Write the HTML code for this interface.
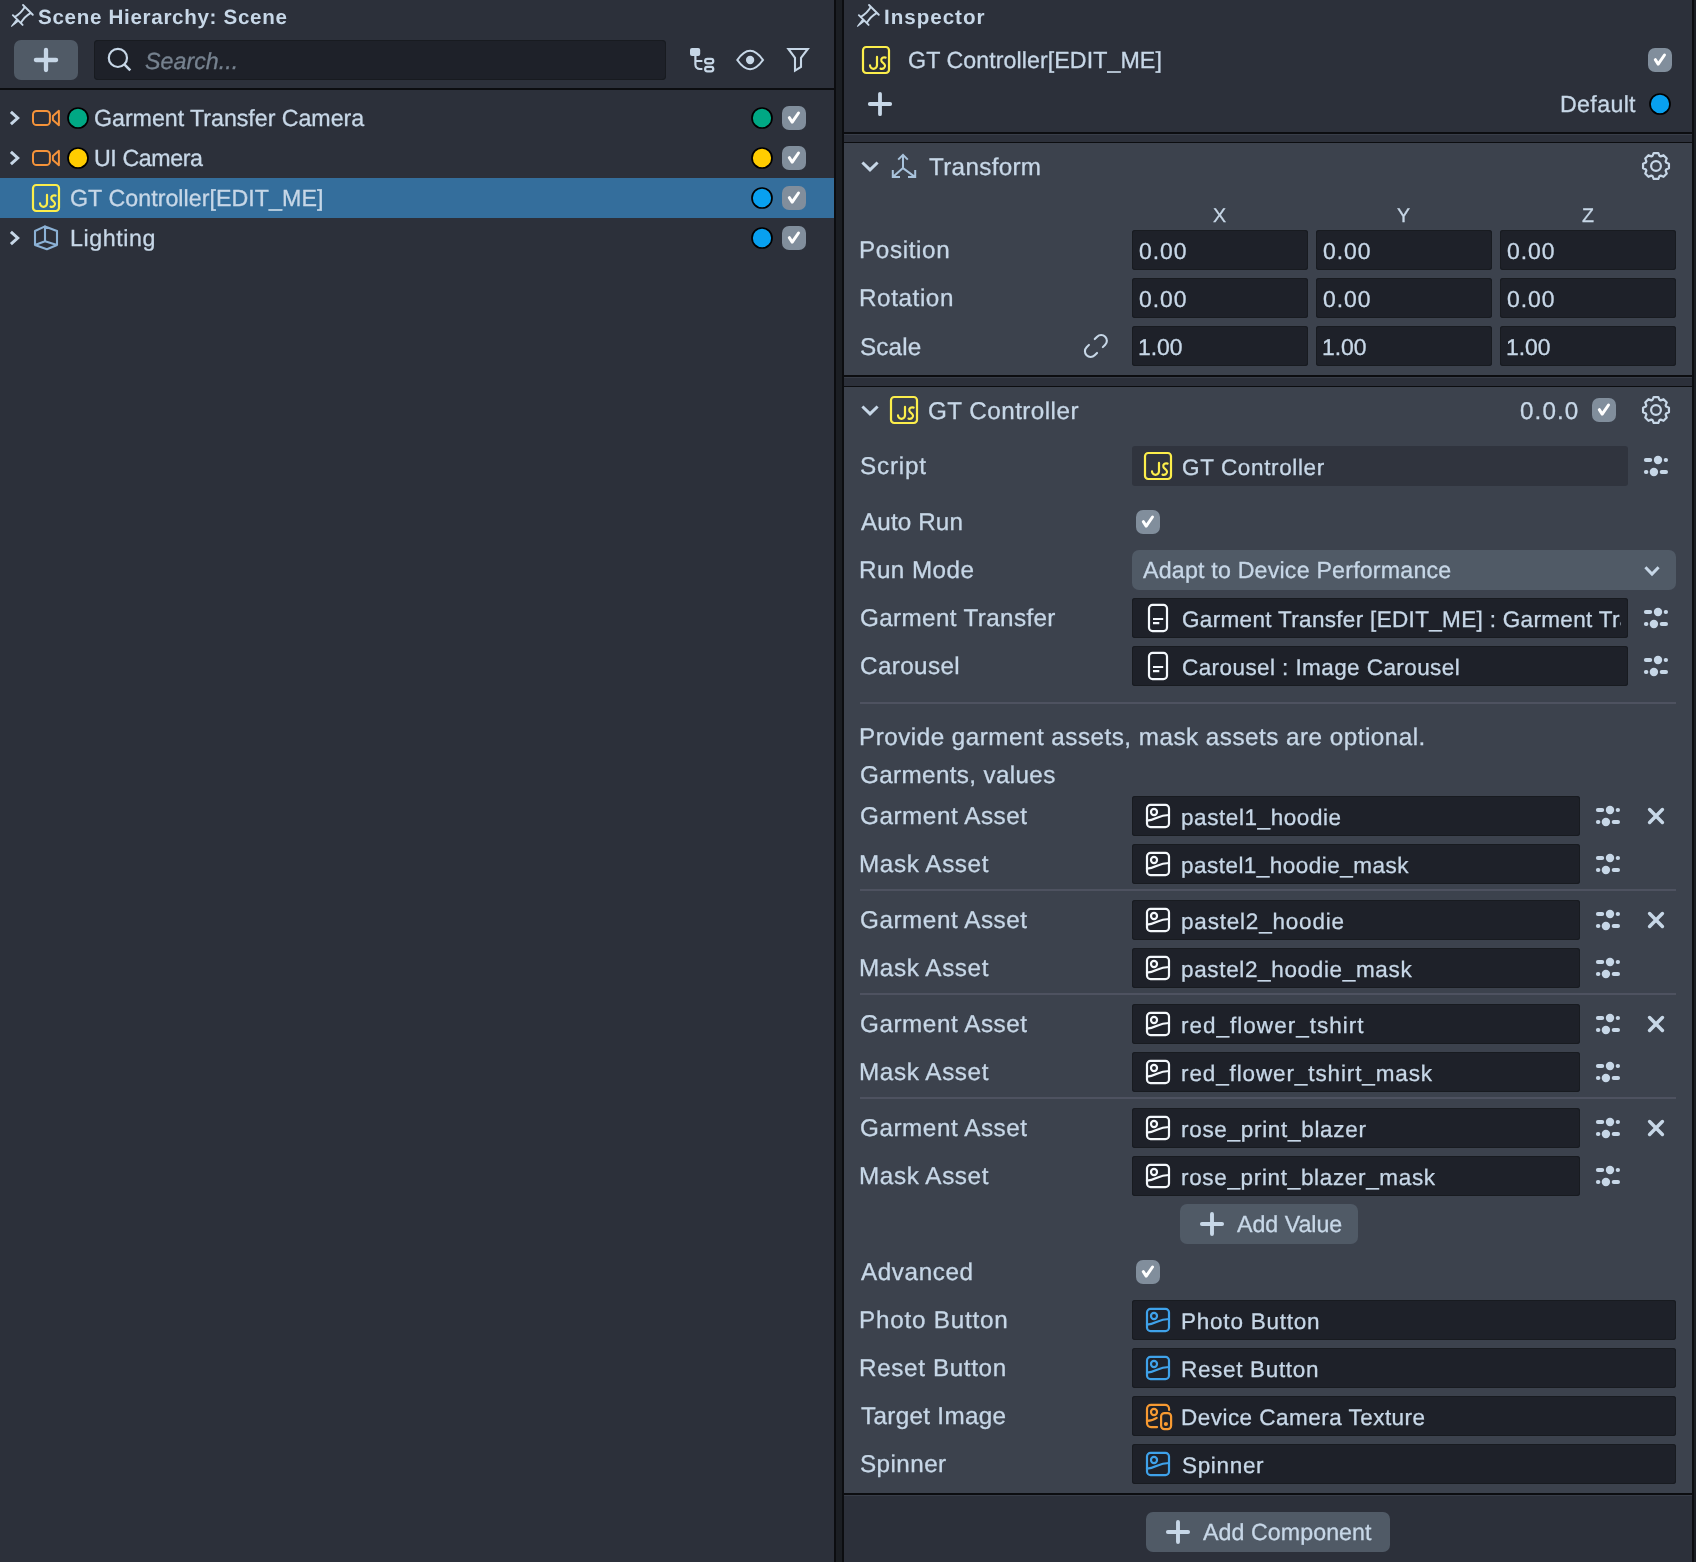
<!DOCTYPE html>
<html lang="en"><head><meta charset="utf-8"><title>Lens Studio - Scene Hierarchy / Inspector</title>
<style>
html,body{margin:0;padding:0}
body{width:1696px;height:1562px;position:relative;overflow:hidden;background:#2c303a;font-family:"Liberation Sans", sans-serif;color:#c7d7e7}
.b{position:absolute;box-sizing:border-box}
.t{position:absolute;white-space:pre;line-height:1;margin:0;padding:0;transform:skewX(.05deg);-webkit-text-stroke:.3px}
.in{background:#1e2129;border-radius:3px;box-shadow:inset 0 0 0 1px #181b20}
.btn{background:#505a66;border-radius:7px}
.chk{background:#818e9c;border-radius:7px;width:24px;height:24px}
.sec{background:#3c424d}
.dk{background:#0c0d10}
.sp{background:#4e5260;height:2px;left:860px;width:816px}
svg{position:absolute;left:0;top:0}
</style></head><body>
<!-- Scene Hierarchy panel -->
<div class="b btn" style="left:14px;top:40px;width:64px;height:40px;"></div>
<div class="b in" style="left:94px;top:40px;width:572px;height:40px;border-radius:4px"></div>
<div class="b dk" style="left:0px;top:88px;width:834px;height:2px;"></div>
<div class="b " style="left:0px;top:178px;width:834px;height:40px;background:#346e9c"></div>
<div class="b chk" style="left:782px;top:106px;width:24px;height:24px;"></div>
<div class="b chk" style="left:782px;top:146px;width:24px;height:24px;"></div>
<div class="b chk" style="left:782px;top:186px;width:24px;height:24px;"></div>
<div class="b chk" style="left:782px;top:226px;width:24px;height:24px;"></div>
<div class="b " style="left:834px;top:0px;width:10px;height:1562px;background:#1b1e23;border-left:2px solid #0c0d10;border-right:2px solid #0c0d10"></div>
<!-- Inspector panel -->
<div class="b chk" style="left:1648px;top:48px;width:24px;height:24px;"></div>
<div class="b dk" style="left:844px;top:132px;width:848px;height:2px;"></div>
<div class="b " style="left:844px;top:134px;width:848px;height:1px;background:#383d48"></div>
<div class="b dk" style="left:844px;top:142px;width:848px;height:1px;"></div>
<div class="b sec" style="left:844px;top:143px;width:848px;height:232px;"></div>
<div class="b dk" style="left:844px;top:375px;width:848px;height:2px;"></div>
<div class="b " style="left:844px;top:377px;width:848px;height:1px;background:#383d48"></div>
<div class="b dk" style="left:844px;top:386px;width:848px;height:1px;"></div>
<div class="b sec" style="left:844px;top:387px;width:848px;height:1106px;"></div>
<div class="b dk" style="left:844px;top:1493px;width:848px;height:2px;"></div>
<div class="b " style="left:844px;top:1495px;width:848px;height:1px;background:#383d48"></div>
<div class="b " style="left:1692px;top:0px;width:2px;height:1562px;background:#0c0d10"></div>
<div class="b " style="left:1694px;top:0px;width:2px;height:1562px;background:#1b1e23"></div>
<div class="b in" style="left:1132px;top:230px;width:176px;height:40px;"></div>
<div class="b in" style="left:1316px;top:230px;width:176px;height:40px;"></div>
<div class="b in" style="left:1500px;top:230px;width:176px;height:40px;"></div>
<div class="b in" style="left:1132px;top:278px;width:176px;height:40px;"></div>
<div class="b in" style="left:1316px;top:278px;width:176px;height:40px;"></div>
<div class="b in" style="left:1500px;top:278px;width:176px;height:40px;"></div>
<div class="b in" style="left:1132px;top:326px;width:176px;height:40px;"></div>
<div class="b in" style="left:1316px;top:326px;width:176px;height:40px;"></div>
<div class="b in" style="left:1500px;top:326px;width:176px;height:40px;"></div>
<div class="b chk" style="left:1592px;top:398px;width:24px;height:24px;"></div>
<div class="b " style="left:1132px;top:446px;width:496px;height:40px;background:#30343e;border-radius:3px"></div>
<div class="b chk" style="left:1136px;top:510px;width:24px;height:24px;"></div>
<div class="b btn" style="left:1132px;top:550px;width:544px;height:40px;border-radius:7px"></div>
<div class="b in" style="left:1132px;top:598px;width:496px;height:40px;"></div>
<div class="b in" style="left:1132px;top:646px;width:496px;height:40px;"></div>
<div class="b sp" style="left:860px;top:702px;width:816px;height:2px;"></div>
<div class="b in" style="left:1132px;top:796px;width:448px;height:40px;"></div>
<div class="b in" style="left:1132px;top:844px;width:448px;height:40px;"></div>
<div class="b sp" style="left:860px;top:889px;width:816px;height:2px;"></div>
<div class="b in" style="left:1132px;top:900px;width:448px;height:40px;"></div>
<div class="b in" style="left:1132px;top:948px;width:448px;height:40px;"></div>
<div class="b sp" style="left:860px;top:993px;width:816px;height:2px;"></div>
<div class="b in" style="left:1132px;top:1004px;width:448px;height:40px;"></div>
<div class="b in" style="left:1132px;top:1052px;width:448px;height:40px;"></div>
<div class="b sp" style="left:860px;top:1097px;width:816px;height:2px;"></div>
<div class="b in" style="left:1132px;top:1108px;width:448px;height:40px;"></div>
<div class="b in" style="left:1132px;top:1156px;width:448px;height:40px;"></div>
<div class="b btn" style="left:1180px;top:1204px;width:178px;height:40px;"></div>
<div class="b chk" style="left:1136px;top:1260px;width:24px;height:24px;"></div>
<div class="b in" style="left:1132px;top:1300px;width:544px;height:40px;"></div>
<div class="b in" style="left:1132px;top:1348px;width:544px;height:40px;"></div>
<div class="b in" style="left:1132px;top:1396px;width:544px;height:40px;"></div>
<div class="b in" style="left:1132px;top:1444px;width:544px;height:40px;"></div>
<div class="b btn" style="left:1146px;top:1512px;width:244px;height:40px;"></div>
<div id="labels" style="position:absolute;left:0;top:0;width:1696px;height:1562px;will-change:transform">
<span class="t" style="left:37.95px;top:6.53px;font-size:20.64px;letter-spacing:0.662px;font-weight:bold;-webkit-text-stroke:0;">Scene Hierarchy: Scene</span>
<span class="t" style="left:145.40px;top:50.06px;font-size:23.26px;letter-spacing:0.01px;font-style:italic;color:#76828f;">Search...</span>
<span class="t" style="left:93.50px;top:107.31px;font-size:23.26px;letter-spacing:-0.054px;">Garment Transfer Camera</span>
<span class="t" style="left:93.52px;top:147.31px;font-size:23.26px;letter-spacing:-0.43px;">UI Camera</span>
<span class="t" style="left:69.75px;top:187.31px;font-size:23.26px;letter-spacing:0.027px;">GT Controller[EDIT_ME]</span>
<span class="t" style="left:70.42px;top:227.31px;font-size:23.26px;letter-spacing:0.574px;">Lighting</span>
<span class="t" style="left:883.62px;top:6.53px;font-size:20.64px;letter-spacing:0.953px;font-weight:bold;-webkit-text-stroke:0;">Inspector</span>
<span class="t" style="left:907.50px;top:48.51px;font-size:23.26px;letter-spacing:0.05px;">GT Controller[EDIT_ME]</span>
<span class="t" style="left:1559.67px;top:93.31px;font-size:23.26px;letter-spacing:0.318px;">Default</span>
<span class="t" style="left:929.24px;top:155.36px;font-size:24.27px;letter-spacing:0.299px;">Transform</span>
<span class="t" style="left:1213.25px;top:206.39px;font-size:19.62px;">X</span>
<span class="t" style="left:1397.20px;top:206.39px;font-size:19.62px;">Y</span>
<span class="t" style="left:1581.54px;top:206.39px;font-size:19.62px;">Z</span>
<span class="t" style="left:859.28px;top:238.26px;font-size:24.27px;letter-spacing:0.629px;">Position</span>
<span class="t" style="left:1138.88px;top:240.36px;font-size:22.97px;letter-spacing:0.902px;">0.00</span>
<span class="t" style="left:1322.88px;top:240.36px;font-size:22.97px;letter-spacing:0.902px;">0.00</span>
<span class="t" style="left:1506.88px;top:240.36px;font-size:22.97px;letter-spacing:0.902px;">0.00</span>
<span class="t" style="left:859.24px;top:286.36px;font-size:24.27px;letter-spacing:0.574px;">Rotation</span>
<span class="t" style="left:1138.88px;top:288.36px;font-size:22.97px;letter-spacing:0.902px;">0.00</span>
<span class="t" style="left:1322.88px;top:288.36px;font-size:22.97px;letter-spacing:0.902px;">0.00</span>
<span class="t" style="left:1506.88px;top:288.36px;font-size:22.97px;letter-spacing:0.902px;">0.00</span>
<span class="t" style="left:859.88px;top:335.06px;font-size:24.27px;letter-spacing:0.125px;">Scale</span>
<span class="t" style="left:1137.64px;top:336.36px;font-size:22.97px;letter-spacing:-0.081px;">1.00</span>
<span class="t" style="left:1321.64px;top:336.36px;font-size:22.97px;letter-spacing:-0.081px;">1.00</span>
<span class="t" style="left:1505.64px;top:336.36px;font-size:22.97px;letter-spacing:-0.081px;">1.00</span>
<span class="t" style="left:928.00px;top:399.21px;font-size:24.27px;letter-spacing:0.439px;">GT Controller</span>
<span class="t" style="left:1519.99px;top:399.21px;font-size:24.27px;letter-spacing:1.075px;">0.0.0</span>
<span class="t" style="left:859.88px;top:454.21px;font-size:24.27px;letter-spacing:0.795px;">Script</span>
<span class="t" style="left:1181.50px;top:456.93px;font-size:22.53px;letter-spacing:0.62px;">GT Controller</span>
<span class="t" style="left:861.00px;top:510.06px;font-size:24.27px;letter-spacing:0.107px;">Auto Run</span>
<span class="t" style="left:859.24px;top:558.06px;font-size:24.27px;letter-spacing:0.419px;">Run Mode</span>
<span class="t" style="left:1142.75px;top:559.21px;font-size:23.26px;letter-spacing:0.176px;">Adapt to Device Performance</span>
<span class="t" style="left:860.00px;top:606.36px;font-size:24.27px;letter-spacing:0.353px;">Garment Transfer</span>
<span class="t" style="left:1181.75px;top:608.53px;font-size:22.53px;letter-spacing:0.318px;width:438.65px;overflow:hidden;">Garment Transfer [EDIT_ME] : Garment Transfer</span>
<span class="t" style="left:859.96px;top:654.26px;font-size:24.27px;letter-spacing:0.37px;">Carousel</span>
<span class="t" style="left:1181.75px;top:656.73px;font-size:22.53px;letter-spacing:0.412px;">Carousel : Image Carousel</span>
<span class="t" style="left:859.28px;top:725.46px;font-size:24.27px;letter-spacing:0.474px;">Provide garment assets, mask assets are optional.</span>
<span class="t" style="left:860.00px;top:763.26px;font-size:24.27px;letter-spacing:0.343px;">Garments, values</span>
<span class="t" style="left:860.00px;top:804.26px;font-size:24.27px;letter-spacing:0.547px;">Garment Asset</span>
<span class="t" style="left:859.28px;top:852.26px;font-size:24.27px;letter-spacing:0.593px;">Mask Asset</span>
<span class="t" style="left:1181.35px;top:806.83px;font-size:22.53px;letter-spacing:0.562px;">pastel1_hoodie</span>
<span class="t" style="left:1181.35px;top:854.83px;font-size:22.53px;letter-spacing:0.463px;">pastel1_hoodie_mask</span>
<span class="t" style="left:860.00px;top:908.26px;font-size:24.27px;letter-spacing:0.547px;">Garment Asset</span>
<span class="t" style="left:859.28px;top:956.26px;font-size:24.27px;letter-spacing:0.593px;">Mask Asset</span>
<span class="t" style="left:1181.35px;top:910.83px;font-size:22.53px;letter-spacing:0.793px;">pastel2_hoodie</span>
<span class="t" style="left:1181.35px;top:958.83px;font-size:22.53px;letter-spacing:0.643px;">pastel2_hoodie_mask</span>
<span class="t" style="left:860.00px;top:1012.26px;font-size:24.27px;letter-spacing:0.547px;">Garment Asset</span>
<span class="t" style="left:859.28px;top:1060.26px;font-size:24.27px;letter-spacing:0.593px;">Mask Asset</span>
<span class="t" style="left:1181.23px;top:1014.83px;font-size:22.53px;letter-spacing:1.002px;">red_flower_tshirt</span>
<span class="t" style="left:1181.23px;top:1062.83px;font-size:22.53px;letter-spacing:0.874px;">red_flower_tshirt_mask</span>
<span class="t" style="left:860.00px;top:1116.26px;font-size:24.27px;letter-spacing:0.547px;">Garment Asset</span>
<span class="t" style="left:859.28px;top:1164.26px;font-size:24.27px;letter-spacing:0.593px;">Mask Asset</span>
<span class="t" style="left:1181.23px;top:1118.83px;font-size:22.53px;letter-spacing:0.684px;">rose_print_blazer</span>
<span class="t" style="left:1181.23px;top:1166.83px;font-size:22.53px;letter-spacing:0.658px;">rose_print_blazer_mask</span>
<span class="t" style="left:1237.00px;top:1213.31px;font-size:23.26px;letter-spacing:-0.035px;">Add Value</span>
<span class="t" style="left:861.00px;top:1260.06px;font-size:24.27px;letter-spacing:0.583px;">Advanced</span>
<span class="t" style="left:859.28px;top:1308.16px;font-size:24.27px;letter-spacing:0.755px;">Photo Button</span>
<span class="t" style="left:1181.03px;top:1310.73px;font-size:22.53px;letter-spacing:0.768px;">Photo Button</span>
<span class="t" style="left:859.24px;top:1356.16px;font-size:24.27px;letter-spacing:0.624px;">Reset Button</span>
<span class="t" style="left:1181.03px;top:1358.73px;font-size:22.53px;letter-spacing:0.658px;">Reset Button</span>
<span class="t" style="left:861.24px;top:1404.16px;font-size:24.27px;letter-spacing:0.312px;">Target Image</span>
<span class="t" style="left:1181.07px;top:1406.73px;font-size:22.53px;letter-spacing:0.462px;">Device Camera Texture</span>
<span class="t" style="left:859.88px;top:1452.16px;font-size:24.27px;letter-spacing:0.423px;">Spinner</span>
<span class="t" style="left:1181.71px;top:1454.73px;font-size:22.53px;letter-spacing:0.659px;">Spinner</span>
<span class="t" style="left:1203.25px;top:1520.91px;font-size:23.26px;letter-spacing:0.039px;">Add Component</span>
</div>
<svg width="1696" height="1562" viewBox="0 0 1696 1562" fill="none" stroke-linecap="round" stroke-linejoin="round">
<defs>
<g id="gear" stroke="#c7d7e7" stroke-width="2.2"><path d="M-3.48,-10.12 L-2.28,-12.95 L2.28,-12.95 L3.48,-10.12 L4.69,-9.62 L7.54,-10.77 L10.77,-7.54 L9.62,-4.69 L10.12,-3.48 L12.95,-2.28 L12.95,2.28 L10.12,3.48 L9.62,4.69 L10.77,7.54 L7.54,10.77 L4.69,9.62 L3.48,10.12 L2.28,12.95 L-2.28,12.95 L-3.48,10.12 L-4.69,9.62 L-7.54,10.77 L-10.77,7.54 L-9.62,4.69 L-10.12,3.48 L-12.95,2.28 L-12.95,-2.28 L-10.12,-3.48 L-9.62,-4.69 L-10.77,-7.54 L-7.54,-10.77 L-4.69,-9.62Z"/><circle r="4.9"/></g>
<g id="pin" stroke="#c7d7e7" stroke-width="1.9"><path d="M-6.9,0H6.9M-6.9,14.4H6.9M-4.3,0C-2.9,5 -2.9,9.4 -4.3,14.4M4.3,0C2.9,5 2.9,9.4 4.3,14.4"/><path d="M-1.2,14.8L0,23.2L1.2,14.8Z" fill="#c7d7e7" stroke-width="1.1"/></g>
<g id="js" stroke="#fcee4b" stroke-width="2.2"><rect x="-13" y="-13" width="26" height="26" rx="3.2"/><path d="M1,-3.1V5.3A3.5,3.5 0 0 1 -6,5.3"/><path d="M9.6,-2.4C7.2,-3.3 4.6,-1.6 5.4,1C5.9,2.7 8.6,3.4 9,5.5C9.4,7.9 6.8,9.4 4.5,8.6"/></g>
<path id="chr" d="M-4.1,-6.1L2.7,0L-4.1,6.1" stroke="#c7d7e7" stroke-width="3" stroke-linecap="butt" stroke-linejoin="miter"/>
<path id="chd" d="M-7.6,-3.6L0,3.8L7.6,-3.6" stroke="#c7d7e7" stroke-width="3" stroke-linecap="butt" stroke-linejoin="miter"/>
<path id="chd2" d="M-6.6,-3.3L0,3.4L6.6,-3.3" stroke="#c7d7e7" stroke-width="3" stroke-linecap="butt" stroke-linejoin="miter"/>
<g id="cam" stroke="#f5933a" stroke-width="2"><rect x="-13" y="-7.1" width="16.9" height="14.2" rx="3.6"/><path d="M6.9,-1.9L12.9,-7.2V7.2L6.9,1.9Z"/></g>
<circle id="dot" r="10" stroke="#000" stroke-width="1.7"/>
<path id="ck" d="M-4.7,-0.3L-1.8,4.1L4.5,-5" stroke="#fff" stroke-width="3"/>
<g id="sl" fill="#c7d7e7"><rect x="-12.1" y="-8" width="8.3" height="4" rx="2"/><circle cx="2" cy="-6" r="4.2"/><rect x="7.7" y="-8" width="4.3" height="4" rx="2"/><rect x="-12.1" y="4" width="4.5" height="4" rx="2"/><circle cx="-2.1" cy="6" r="4.2"/><rect x="3.7" y="4" width="8.3" height="4" rx="2"/></g>
<path id="xx" d="M-6.4,-6.4L6.4,6.4M6.4,-6.4L-6.4,6.4" stroke="#c7d7e7" stroke-width="3.5"/>
<g id="doc" stroke="#f4f8fc" stroke-width="2.2"><rect x="-9" y="-13.1" width="18" height="26.2" rx="3.6"/><path d="M-5,1H5.2M-5,5.1H1.3" stroke-linecap="butt"/></g>
<g id="img" stroke="#f4f8fc" stroke-width="2.2"><rect x="-11" y="-11.1" width="22" height="22.2" rx="3.6"/><circle cx="-4" cy="-4" r="3.05"/><path d="M-11,4.7C-2,4 0,-1 11,-1"/></g>
<g id="imgb" stroke="#3fa2ea" stroke-width="2.2"><rect x="-11" y="-11.1" width="22" height="22.2" rx="3.6"/><circle cx="-4" cy="-4" r="3.05"/><path d="M-11,4.7C-2,4 0,-1 11,-1"/></g>
<g id="dev" stroke="#f79a32" stroke-width="2.2"><path d="M11.1,-6V-7.1a4,4 0 0 0 -4,-4H-7a4,4 0 0 0 -4,4V7.1a4,4 0 0 0 4,4H-0.9"/><circle cx="-4" cy="-4" r="3.05"/><path d="M-11,4.8Q-5.2,4.6 -1.3,1.8"/><rect x="3.1" y="-2.9" width="10" height="16.1" rx="3.4"/><circle cx="7.9" cy="8" r="2.1" fill="#f79a32" stroke="none"/></g>
<path id="pl" d="M-10.1,0H10.1M0,-10.1V10.1" stroke="#c7d7e7" stroke-width="3.9"/>
</defs>
<use href="#pin" transform="translate(27.9,9.85) rotate(45)"/>
<path d="M35.9,60H56.1M46,49.9V70.1" stroke="#c7d7e7" stroke-width="4.3"/>
<circle cx="117.9" cy="57.9" r="9.1" stroke="#c7d7e7" stroke-width="2.2"/><path d="M124.6,64.6L130.3,70.3" stroke="#c7d7e7" stroke-width="2.6" stroke-linecap="butt"/>
<g stroke="#c7d7e7" stroke-width="2.2"><rect x="690" y="48" width="10.2" height="8" rx="2" fill="#c7d7e7" stroke="none"/><path d="M695.4,55V64.6a4.4,4.4 0 0 0 4.4,4.4H702.4M695.4,61H702.4" stroke-linecap="butt"/><rect x="705.1" y="58.8" width="8.2" height="4.6" rx="2.3"/><rect x="705.1" y="66.8" width="8.2" height="4.6" rx="2.3"/></g>
<path d="M737.3,60C741.2,54.4 745.6,50.8 750.1,50.8S759,54.4 763,60C759,65.6 754.6,69.2 750.1,69.2S741.2,65.6 737.3,60Z" stroke="#c7d7e7" stroke-width="2.1" stroke-linejoin="miter"/><circle cx="750.1" cy="60" r="4.15" fill="#c7d7e7"/>
<path d="M788.4,49H807.8L801,57.9V66.8L795,70.6V57.9Z" stroke="#c7d7e7" stroke-width="2.1" stroke-linejoin="miter"/>
<use href="#chr" x="15" y="118"/>
<use href="#chr" x="15" y="158"/>
<use href="#chr" x="15" y="238"/>
<use href="#cam" x="46" y="118"/>
<use href="#cam" x="46" y="158"/>
<use href="#dot" x="78" y="118" fill="#00a884"/><use href="#dot" x="78" y="158" fill="#ffcc00"/>
<use href="#js" x="46" y="198"/>
<path d="M45,226.4L57,231V245L46.9,249.2L35,245V231ZM45,226.4V241.2M45,241.2L35,245M45,241.2L57,245" stroke="#8cb2d6" stroke-width="2.1"/>
<use href="#dot" x="762" y="118" fill="#00a884"/>
<use href="#ck" x="794" y="118"/>
<use href="#dot" x="762" y="158" fill="#ffcc00"/>
<use href="#ck" x="794" y="158"/>
<use href="#dot" x="762" y="198" fill="#08a0f0"/>
<use href="#ck" x="794" y="198"/>
<use href="#dot" x="762" y="238" fill="#08a0f0"/>
<use href="#ck" x="794" y="238"/>
<use href="#pin" transform="translate(873.9,9.85) rotate(45)"/>
<use href="#js" x="876" y="60"/>
<use href="#ck" x="1660" y="60"/>
<path d="M869.8,104H890.2M880,93.8V114.2" stroke="#c7d7e7" stroke-width="3.8"/>
<use href="#dot" x="1660" y="104" fill="#08a0f0"/>
<use href="#chd" x="870" y="166.1"/>
<use href="#gear" x="1656" y="166"/>
<path d="M903,168.1V154.8M898.2,159.6L903,154.8L907.8,159.6M903,168.1L892.8,177.1M892.8,170V177.1H900M903,168.1L915.2,177.1M915.2,170V177.1H908" stroke="#a9c3dc" stroke-width="2" stroke-linecap="butt" stroke-linejoin="miter"/>
<g transform="translate(1095.9,346) rotate(-45)" stroke="#c7d7e7" stroke-width="2.1"><path d="M4.1,-5.7H7.45A5.7,5.7 0 0 1 7.45,5.7H4.1M-4.1,-5.7H-7.45A5.7,5.7 0 0 0 -7.45,5.7H-4.1"/></g>
<use href="#chd" x="870" y="410.1"/>
<use href="#js" x="904" y="410"/>
<use href="#ck" x="1604" y="410"/>
<use href="#gear" x="1656" y="410"/>
<use href="#js" x="1158" y="466"/>
<use href="#sl" x="1656" y="466"/>
<use href="#ck" x="1148" y="522"/>
<use href="#chd2" x="1652" y="570.6"/>
<use href="#doc" x="1158" y="618"/>
<use href="#sl" x="1656" y="618"/>
<use href="#doc" x="1158" y="666"/>
<use href="#sl" x="1656" y="666"/>
<use href="#img" x="1158" y="816"/>
<use href="#sl" x="1608" y="816"/>
<use href="#xx" x="1656" y="816"/>
<use href="#img" x="1158" y="864"/>
<use href="#sl" x="1608" y="864"/>
<use href="#img" x="1158" y="920"/>
<use href="#sl" x="1608" y="920"/>
<use href="#xx" x="1656" y="920"/>
<use href="#img" x="1158" y="968"/>
<use href="#sl" x="1608" y="968"/>
<use href="#img" x="1158" y="1024"/>
<use href="#sl" x="1608" y="1024"/>
<use href="#xx" x="1656" y="1024"/>
<use href="#img" x="1158" y="1072"/>
<use href="#sl" x="1608" y="1072"/>
<use href="#img" x="1158" y="1128"/>
<use href="#sl" x="1608" y="1128"/>
<use href="#xx" x="1656" y="1128"/>
<use href="#img" x="1158" y="1176"/>
<use href="#sl" x="1608" y="1176"/>
<use href="#pl" x="1212" y="1224"/>
<use href="#ck" x="1148" y="1272"/>
<use href="#imgb" x="1158" y="1320"/>
<use href="#imgb" x="1158" y="1368"/>
<use href="#dev" x="1158" y="1416"/>
<use href="#imgb" x="1158" y="1464"/>
<use href="#pl" x="1178" y="1532"/>
</svg>
</body></html>
